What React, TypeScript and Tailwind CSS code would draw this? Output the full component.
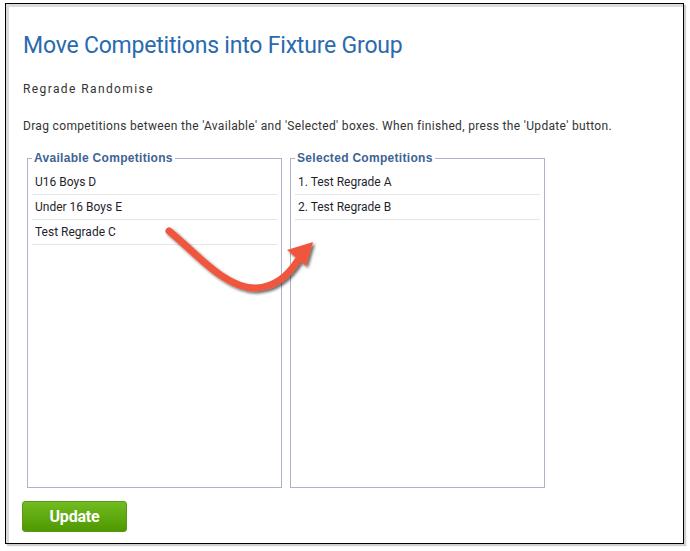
import React from 'react';

const available = ['U16 Boys D', 'Under 16 Boys E', 'Test Regrade C'];
const selected = ['1. Test Regrade A', '2. Test Regrade B'];

export default function App() {
  return (
    <div className="w-[690px] h-[551px] bg-white pl-[5px] pt-[3px] font-['Roboto',sans-serif] relative">
      <div className="w-[679px] h-[541px] border border-black bg-white shadow-[2px_2px_1px_#cfcfcf]">
        <div className="h-full border-l-[3px] border-t-[3px] border-[#dcdcdc] pl-[14px] pt-[24px]">
          <h1 className="text-[23px] leading-[30px] text-[#2a6aae] tracking-[-0.2px]">
            Move Competitions into Fixture Group
          </h1>
          <p className="mt-[20px] text-[12px] leading-[16px] text-[#333] tracking-[1.4px]">Regrade Randomise</p>
          <p className="mt-[21px] text-[12px] leading-[16px] text-[#333] tracking-[0.33px]">
            Drag competitions between the 'Available' and 'Selected' boxes. When finished, press the 'Update' button.
          </p>

          <div className="mt-[17px] ml-[4px] flex gap-[8px]">
            <Box title="Available Competitions" items={available} />
            <Box title="Selected Competitions" items={selected} />
          </div>

          <button className="mt-[13px] -ml-[1px] w-[105px] h-[31px] rounded-[3px] border border-[#58971a] bg-gradient-to-b from-[#71bc1f] to-[#4f9800] text-white font-bold text-[16px] tracking-[-0.2px]">
            Update
          </button>
        </div>
      </div>

      {/* annotation arrow */}
      <svg className="absolute left-0 top-0 pointer-events-none" width="690" height="551">
        <defs>
          <filter id="sh" x="-20%" y="-20%" width="140%" height="140%">
            <feGaussianBlur in="SourceAlpha" stdDeviation="1.5" />
            <feOffset dx="2" dy="2" result="b" />
            <feComponentTransfer>
              <feFuncA type="linear" slope="0.6" />
            </feComponentTransfer>
            <feMerge>
              <feMergeNode />
              <feMergeNode in="SourceGraphic" />
            </feMerge>
          </filter>
        </defs>
        <g filter="url(#sh)">
          <path
            d="M169 231 C 195 252 225 289 256 288 C 275 287 288 276 298 260"
            fill="none"
            stroke="#f0553d"
            strokeWidth="7"
            strokeLinecap="round"
          />
          <polygon points="313,242 287,250 306,266" fill="#f0553d" />
        </g>
      </svg>
    </div>
  );
}

function Box({ title, items }: { title: string; items: string[] }) {
  return (
    <fieldset className="w-[255px] h-[337px] border border-[#aeb2c9] px-[4px]">
      <legend className="px-[2px] text-[12px] leading-[14px] font-bold tracking-[0.3px] text-[#3d6394] font-['Liberation_Sans',sans-serif]">
        {title}
      </legend>
      <ul className="mt-[5px]">
        {items.map((it) => (
          <li key={it} className="h-[25px] leading-[24px] pl-[3px] border-b border-[#e6e6e6] text-[12px] text-[#1f1f2e]">
            {it}
          </li>
        ))}
      </ul>
    </fieldset>
  );
}
